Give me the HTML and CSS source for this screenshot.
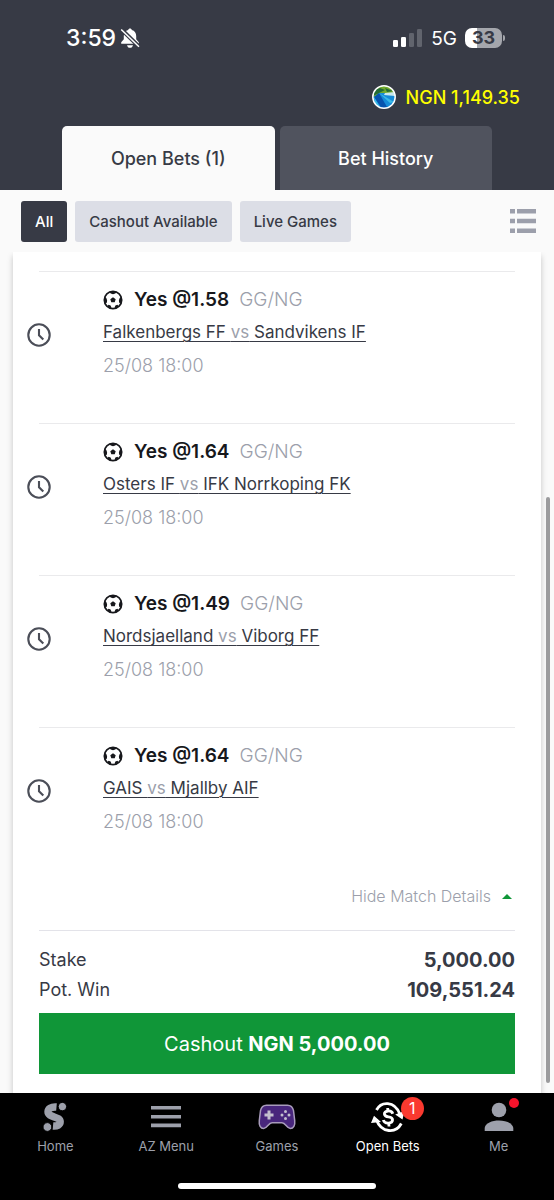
FILE: index.html
```html
<!DOCTYPE html>
<html lang="en">
<head>
<meta charset="utf-8">
<meta name="viewport" content="width=device-width, initial-scale=1">
<title>Open Bets</title>
<link rel="stylesheet" href="styles.css">
</head>
<body>
<svg class="defs" width="0" height="0" aria-hidden="true">
  <symbol id="ball" viewBox="0 0 20 20">
    <circle cx="10" cy="10" r="8.7" fill="none" stroke="#17181c" stroke-width="1.7"/>
    <path fill="#17181c" d="M10 7.200l2.700 2-1 3.100H8.300l-1-3.100zM6.200 1.800h7.600L12.300 3.500 10 4.200 7.700 3.500zM18.300 6.500l.7 3.500-1 4-1.900-1.500-.2-2.200.8-2.200zM1.700 6.500L1 10l1 4 1.900-1.500.2-2.200-.8-2.200zM4.200 16.500l1.300-1.700 2.100.8.600 1.300-.2 2zM15.800 16.500l-1.300-1.700-2.100.8-.6 1.300.2 2z"/>
  </symbol>
  <symbol id="clock" viewBox="0 0 24 24">
    <circle cx="12" cy="12" r="10.7" fill="none" stroke="#4b4e58" stroke-width="2.1"/>
    <path d="M12 6v6.300l4.300 4.300" fill="none" stroke="#4b4e58" stroke-width="2.1"/>
  </symbol>
</svg>
<div class="app">
  <header class="header">
    <div class="status">
      <div class="status-left">
        <span class="time">3:59</span>
        <svg class="bell" viewBox="0 0 20 20" aria-hidden="true">
          <path fill="#fff" d="M10 .5c-.9 0-1.600.6-1.800 1.400C5.300 2.600 3.800 5 3.800 8v3.300L1.200 14.300v1.500h17.600v-1.500L16.200 11.300V8c0-3-1.500-5.400-4.400-6.100C11.600 1.100 10.900.5 10 .5zM7 17.200h6c-.4 1.600-1.500 2.600-3 2.600s-2.600-1-3-2.600z"/>
          <path d="M1.500 1.500l17.500 17" stroke="#373a45" stroke-width="4"/>
          <path d="M1.200 1.500l17.800 17.200" stroke="#fff" stroke-width="1.500"/>
        </svg>
      </div>
      <div class="status-right">
        <svg class="signal" viewBox="0 0 29 18" aria-hidden="true">
          <rect x="0" y="11" width="5" height="7" rx="1.300" fill="#fff"/>
          <rect x="8" y="8" width="5" height="10" rx="1.300" fill="#fff"/>
          <rect x="16" y="4" width="5" height="14" rx="1.300" fill="#61646d"/>
          <rect x="24" y="0" width="5" height="18" rx="1.300" fill="#61646d"/>
        </svg>
        <span class="network">5G</span>
        <span class="battery">33</span>
      </div>
    </div>
    <div class="balance">
      <svg class="avatar" viewBox="0 0 24 24" aria-hidden="true">
        <clipPath id="round"><circle cx="12" cy="12" r="11"/></clipPath>
        <g clip-path="url(#round)">
          <path fill="#168bd8" d="M0 0h24v24H0z"/>
          <path fill="#73aa2c" d="M0 0h24v8L7 8 2 12z"/>
          <path fill="#246b35" d="M1 5l7-2 5 2-6 3-6 3zM13 3l8 3-6 1z"/>
          <path fill="#c9e8ee" d="M13 8l11-1v4l-12-1z"/>
          <path fill="#0753ae" d="M7 8l8 14-4 3L2 12z"/>
          <path fill="#39b9e5" d="M7 8l15 9-4 1zM2 12l6 10-5-2z"/>
        </g>
        <circle cx="12" cy="12" r="11.200" fill="none" stroke="#fff" stroke-width="1.500"/>
      </svg>
      <span>NGN 1,149.35</span>
    </div>
    <nav class="tabs" aria-label="Bets">
      <button class="tab tab-active" type="button">Open Bets (1)</button>
      <button class="tab" type="button">Bet History</button>
    </nav>
  </header>

  <div class="filters">
    <button class="filter filter-active" type="button">All</button>
    <button class="filter" type="button">Cashout Available</button>
    <button class="filter" type="button">Live Games</button>
    <button class="view" type="button" aria-label="List view">
      <svg viewBox="0 0 26 24" fill="#9c9fab" aria-hidden="true"><path d="M0 0h5v4.500H0zM7 0h19v4.500H7zM0 9.700h5v4.500H0zM7 9.700h19v4.500H7zM0 19.400h5v4.500H0zM7 19.400h19v4.500H7z"/></svg>
    </button>
  </div>

  <main class="content">
    <section class="card">
      <article class="match">
        <svg class="clock"><use href="#clock"/></svg>
        <div class="details">
          <div class="pick"><svg class="ball"><use href="#ball"/></svg><strong>Yes @1.58</strong><span class="market">GG/NG</span></div>
          <a class="teams" href="#">Falkenbergs FF <span class="vs">vs</span> Sandvikens IF</a>
          <time class="date">25/08 18:00</time>
        </div>
      </article>
      <article class="match">
        <svg class="clock"><use href="#clock"/></svg>
        <div class="details">
          <div class="pick"><svg class="ball"><use href="#ball"/></svg><strong>Yes @1.64</strong><span class="market">GG/NG</span></div>
          <a class="teams" href="#">Osters IF <span class="vs">vs</span> IFK Norrkoping FK</a>
          <time class="date">25/08 18:00</time>
        </div>
      </article>
      <article class="match">
        <svg class="clock"><use href="#clock"/></svg>
        <div class="details">
          <div class="pick"><svg class="ball"><use href="#ball"/></svg><strong>Yes @1.49</strong><span class="market">GG/NG</span></div>
          <a class="teams" href="#">Nordsjaelland <span class="vs">vs</span> Viborg FF</a>
          <time class="date">25/08 18:00</time>
        </div>
      </article>
      <article class="match">
        <svg class="clock"><use href="#clock"/></svg>
        <div class="details">
          <div class="pick"><svg class="ball"><use href="#ball"/></svg><strong>Yes @1.64</strong><span class="market">GG/NG</span></div>
          <a class="teams" href="#">GAIS <span class="vs">vs</span> Mjallby AIF</a>
          <time class="date">25/08 18:00</time>
        </div>
      </article>
      <button class="toggle" type="button">Hide Match Details
        <svg class="caret" viewBox="0 0 10 5" aria-hidden="true"><path fill="#109638" d="M0 5l5-5 5 5z"/></svg>
      </button>
      <dl class="totals">
        <div class="total"><dt>Stake</dt><dd>5,000.00</dd></div>
        <div class="total"><dt>Pot. Win</dt><dd>109,551.24</dd></div>
      </dl>
      <button class="cashout" type="button">Cashout <b>NGN 5,000.00</b></button>
    </section>
    <div class="scrollbar"></div>
  </main>

  <footer class="footer">
    <nav class="menu" aria-label="Main">
      <a class="item" href="#">
        <span class="icon"><svg width="24" height="30" viewBox="0 0 24 30" aria-hidden="true">
          <path d="M13.500 5C8 4.500 5 7 5 9.800c0 6 12.200 4.200 12.200 10 0 3-3 4.600-7.200 4.200" fill="none" stroke="#9da0ab" stroke-width="7.400"/>
          <circle cx="19.400" cy="4.600" r="4.200" fill="#9da0ab" stroke="#000"/>
          <circle cx="4.400" cy="25" r="4.400" fill="#9da0ab" stroke="#000"/>
        </svg></span>
        <span>Home</span>
      </a>
      <a class="item" href="#">
        <span class="icon"><svg width="30" height="22" viewBox="0 0 30 22" fill="#9da0ab" aria-hidden="true"><path d="M0 0h30v3.600H0zM0 9h30v3.600H0zM0 17.600h30v3.600H0z"/></svg></span>
        <span>AZ Menu</span>
      </a>
      <a class="item" href="#">
        <span class="icon"><svg width="38" height="26" viewBox="0 0 38 26" aria-hidden="true">
          <path d="M8.500 1.200h21c3.400 0 5.300 2 6 5.500l1.200 9.800c.6 5-1.300 8-4.300 8-3.800 0-4.700-5.800-8.400-5.800H14c-3.700 0-4.600 5.800-8.400 5.800-3 0-4.900-3-4.300-8l1.200-9.800c.7-3.500 2.600-5.500 6-5.500z" fill="#48267c" stroke="#a89bbb" stroke-width="1.500"/>
          <path d="M11 6.500v9M6.500 11h9" stroke="#c3bfce" stroke-width="3"/>
          <g fill="#c3bfce"><circle cx="27.500" cy="7.500" r="1.500"/><circle cx="27.500" cy="14.500" r="1.500"/><circle cx="24" cy="11" r="1.500"/><circle cx="31" cy="11" r="1.500"/></g>
        </svg></span>
        <span>Games</span>
      </a>
      <a class="item item-active" href="#">
        <span class="icon"><svg width="34" height="32" viewBox="0 0 34 32" fill="none" stroke="#fff" aria-hidden="true">
          <path d="M5.500 9C10 .2 23.500-.6 28.800 13" stroke-width="2.800"/>
          <path d="M30.300 22.500C25 32.500 10.500 32.500 5.200 18.500" stroke-width="2.800"/>
          <path fill="#fff" stroke="none" d="M24.200 13.500l9.300-3.500-2 8.500zM0 22l3-7.300 7 6.300z"/>
          <path d="M21.800 12.800c-.7-2-2.400-3-4.600-2.800-5.700.6-4.500 5.400.2 5.800 5.700.5 5.300 6 .1 6.300-2.800.2-4.600-.9-5.200-3.100" stroke-width="2.800"/>
          <path d="M16.700 7l.3 4M17.700 21.500l.3 4" stroke-width="2.800"/>
        </svg><span class="badge">1</span></span>
        <span>Open Bets</span>
      </a>
      <a class="item" href="#">
        <span class="icon"><svg width="30" height="30" viewBox="0 0 30 30" fill="#9da0ab" aria-hidden="true"><circle cx="15" cy="8" r="7.300"/><path d="M.7 29v-3c1-10 27.600-10 28.600 0v3z"/></svg><span class="dot"></span></span>
        <span>Me</span>
      </a>
    </nav>
    <div class="indicator"></div>
  </footer>
</div>
</body>
</html>
```

FILE: styles.css
```css
* { box-sizing: border-box; }
body {
  margin: 0;
  background: #fafafa;
  color: #373a45;
  font-family: Inter, "Liberation Sans", sans-serif;
}
button { border: 0; padding: 0; font: inherit; color: inherit; background: none; }
a { color: inherit; }
svg { display: block; }
.defs { position: absolute; }
.app { min-height: 100vh; display: flex; flex-direction: column; }

.header { background: #373a45; color: #fff; }
.status {
  height: 76px;
  padding: 0 49px 0 66px;
  display: flex;
  align-items: center;
  justify-content: space-between;
}
.status-left { display: flex; align-items: center; gap: 4px; }
.time { font-size: 23px; font-weight: 500; }
.bell { width: 20px; height: 20px; }
.status-right { display: flex; align-items: center; }
.signal { width: 29px; height: 18px; }
.network { margin: 0 8px 0 9px; font-size: 19px; }
.battery {
  position: relative;
  width: 37px;
  height: 20px;
  margin-right: 3px;
  border-radius: 7px;
  background: linear-gradient(90deg, #fff 33%, #a4a6ac 33%);
  color: #373a45;
  font-size: 18px;
  font-weight: 700;
  line-height: 20px;
  text-align: center;
}
.battery::after {
  content: "";
  position: absolute;
  top: 7px;
  right: -3px;
  width: 2px;
  height: 6px;
  border-radius: 0 2px 2px 0;
  background: #a4a6ac;
}
.balance {
  height: 50px;
  padding: 0 34px 8px 0;
  display: flex;
  align-items: center;
  justify-content: flex-end;
  gap: 10px;
  color: #ff0;
  font-size: 18px;
  font-weight: 500;
}
.avatar { width: 24px; height: 24px; }
.tabs { display: flex; gap: 5px; padding: 0 62px; }
.tab {
  flex: 1;
  height: 64px;
  border-radius: 5px 5px 0 0;
  background: #50535e;
  color: #fff;
  font-size: 18px;
  font-weight: 500;
}
.tab-active { background: #fafafa; color: #373a45; }

.filters {
  height: 62px;
  padding: 0 18px 0 21px;
  display: flex;
  align-items: center;
  gap: 8px;
}
.filter {
  height: 41px;
  padding: 0 14px;
  border-radius: 3px;
  background: #dcdee6;
  font-size: 15px;
  font-weight: 500;
}
.filter-active { background: #373a45; color: #fff; }
.view { width: 26px; height: 24px; margin-left: auto; }

.content { position: relative; flex: 1; display: flex; padding: 0 13px; }
.card {
  flex: 1;
  padding: 19px 26px 18px;
  background: #fff;
  box-shadow: 0 4px 6px rgba(0, 0, 0, .22);
  clip-path: inset(0 -13px);
}
.match {
  height: 152px;
  padding-top: 11px;
  border-top: 1px solid #eaeaec;
  display: flex;
}
.clock { width: 24px; height: 24px; margin: 40px 52px 0 -12px; flex: none; }
.details {
  display: flex;
  flex-direction: column;
  align-items: flex-start;
  font-size: 18px;
  line-height: 33px;
}
.pick { display: flex; align-items: center; color: #17181c; font-size: 19px; }
.pick strong { margin: 0 10px 0 11px; font-weight: 600; }
.ball { width: 20px; height: 20px; }
.market, .date, .vs { color: #9c9fab; }
.market, .date { font-weight: 300; }
.teams { font-size: 17px; text-decoration-thickness: 1px; text-underline-offset: 3px; }
.toggle {
  width: 100%;
  height: 51px;
  padding: 0 3px 17px 0;
  display: flex;
  align-items: flex-end;
  justify-content: flex-end;
  gap: 11px;
  color: #9c9fab;
  font-size: 16px;
  font-weight: 300;
  line-height: 34px;
}
.caret { width: 10px; height: 5px; margin-bottom: 14px; }
.totals { margin: 0; padding: 14px 0 8px; border-top: 1px solid #e3e3e9; line-height: 30px; }
.total { display: flex; justify-content: space-between; font-size: 18px; }
.total dd { margin: 0; font-size: 20px; font-weight: 700; }
.cashout {
  width: 100%;
  height: 61px;
  background: #109638;
  color: #fff;
  font-size: 20px;
}
.cashout b { font-weight: 700; }
.scrollbar {
  position: absolute;
  top: 245px;
  right: 4px;
  bottom: 10px;
  width: 4px;
  border-radius: 2px;
  background: #9b9b9d;
}

.footer { padding: 8px 0 11px; background: #000; }
.menu { display: flex; }
.item {
  flex: 1;
  display: flex;
  flex-direction: column;
  align-items: center;
  color: #9da0ab;
  font-size: 13px;
  line-height: 26px;
  text-decoration: none;
}
.item-active { color: #fff; }
.icon { position: relative; height: 32px; display: flex; align-items: center; }
.badge {
  position: absolute;
  top: -4px;
  left: 30px;
  width: 23px;
  height: 23px;
  border-radius: 50%;
  background: #fa392f;
  font-size: 16px;
  line-height: 23px;
  text-align: center;
}
.dot {
  position: absolute;
  top: -3px;
  right: -5px;
  width: 10px;
  height: 10px;
  border-radius: 50%;
  background: #f5132b;
}
.indicator { width: 198px; height: 6px; margin: 24px auto 0; border-radius: 3px; background: #fff; }
```
